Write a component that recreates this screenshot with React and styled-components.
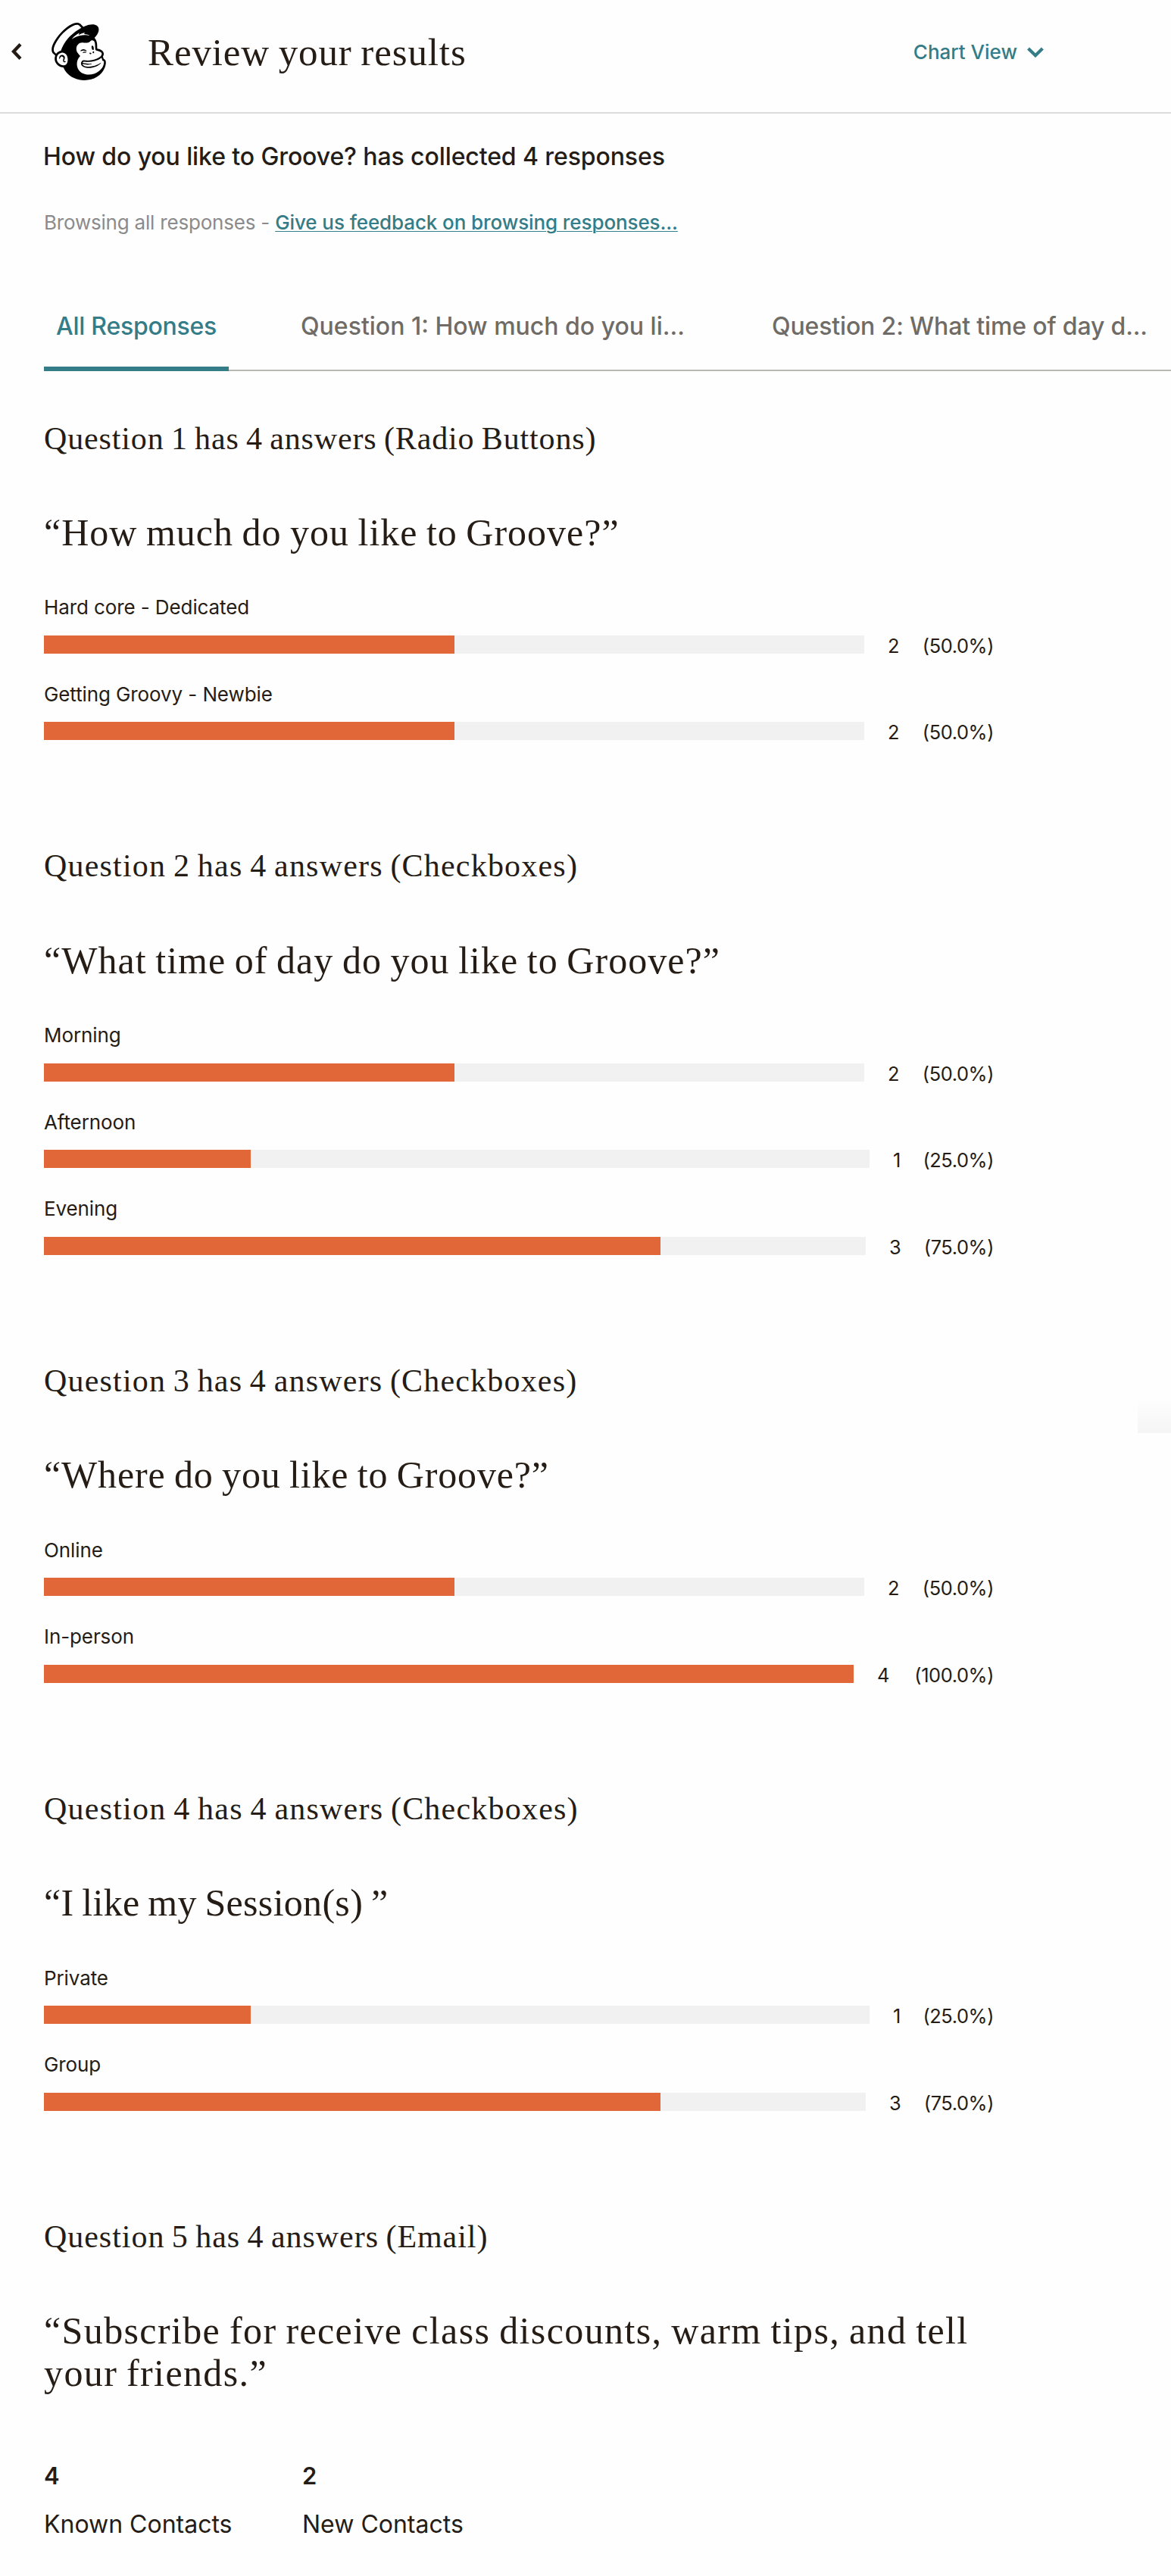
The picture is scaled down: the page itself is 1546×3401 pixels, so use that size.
import React, { useState } from 'react';
import styled, { createGlobalStyle } from 'styled-components';
import { SiMailchimp } from 'react-icons/si';

const tabs = [
  { label: 'All Responses', width: 244, tracking: -0.25 },
  { label: 'Question 1: How much do you li...', width: 543, tracking: 0 },
  { label: 'Question 2: What time of day d...', width: 543, tracking: -0.15 },
];

// stats is the room that the count and the percentage take beside the bar
const questions = [
  {
    title: 'Question 1 has 4 answers (Radio Buttons)',
    titleTracking: 0.86,
    quote: '“How much do you like to Groove?”',
    quoteTracking: 1,
    answers: [
      { label: 'Hard core - Dedicated', count: 2, percent: 50, stats: 171 },
      { label: 'Getting Groovy - Newbie', count: 2, percent: 50, stats: 171 },
    ],
  },
  {
    title: 'Question 2 has 4 answers (Checkboxes)',
    titleTracking: 1.2,
    quote: '“What time of day do you like to Groove?”',
    quoteTracking: 1.04,
    answers: [
      { label: 'Morning', count: 2, percent: 50, stats: 171 },
      { label: 'Afternoon', count: 1, percent: 25, stats: 164 },
      { label: 'Evening', count: 3, percent: 75, stats: 169 },
    ],
  },
  {
    title: 'Question 3 has 4 answers (Checkboxes)',
    titleTracking: 1.18,
    quote: '“Where do you like to Groove?”',
    quoteTracking: 0.86,
    answers: [
      { label: 'Online', count: 2, percent: 50, stats: 171 },
      { label: 'In-person', count: 4, percent: 100, stats: 185 },
    ],
  },
  {
    title: 'Question 4 has 4 answers (Checkboxes)',
    titleTracking: 1.22,
    quote: '“I like my Session(s) ”',
    quoteTracking: 0.3,
    answers: [
      { label: 'Private', count: 1, percent: 25, stats: 164 },
      { label: 'Group', count: 3, percent: 75, stats: 169 },
    ],
  },
  {
    title: 'Question 5 has 4 answers (Email)',
    titleTracking: 0.96,
    quote:
      '“Subscribe for receive class discounts, warm tips, and tell your friends.”',
    quoteTracking: 1.38,
    contacts: [
      { label: 'Known Contacts', count: 4 },
      { label: 'New Contacts', count: 2 },
    ],
  },
];

const Answer = ({ label, count, percent, stats }) => (
  <AnswerRow>
    <AnswerLabel>{label}</AnswerLabel>
    <Meter>
      <Track>
        <Fill style={{ width: `${percent}%` }} />
      </Track>
      <Stats $width={stats}>
        <span>{count}</span>
        <Percent>({percent.toFixed(1)}%)</Percent>
      </Stats>
    </Meter>
  </AnswerRow>
);

const Question = ({ title, titleTracking, quote, quoteTracking, answers, contacts }) => (
  <QuestionSection>
    <QuestionTitle $tracking={titleTracking}>{title}</QuestionTitle>
    <Quote $tracking={quoteTracking}>{quote}</Quote>
    {answers ? (
      <AnswerList>
        {answers.map(answer => (
          <Answer {...answer} key={answer.label} />
        ))}
      </AnswerList>
    ) : null}
    {contacts ? (
      <ContactList>
        {contacts.map(({ label, count }) => (
          <Contact key={label}>
            <ContactCount>{count}</ContactCount>
            <ContactLabel>{label}</ContactLabel>
          </Contact>
        ))}
      </ContactList>
    ) : null}
  </QuestionSection>
);

const App = () => {
  const [activeTab, setActiveTab] = useState(0);

  return (
    <Page>
      <GlobalStyle />
      <Header>
        <BackButton aria-label="Back">
          <svg width="14" height="22" viewBox="0 0 14 22">
            <path d="M12 1.6 L3 11 L12 20.4" fill="none" stroke="#241c15" strokeWidth="4.4" />
          </svg>
        </BackButton>
        <Logo />
        <PageTitle>Review your results</PageTitle>
        <ViewToggle>
          Chart View
          <svg width="22" height="14" viewBox="0 0 22 14">
            <path d="M1.6 2 L11 11.2 L20.4 2" fill="none" stroke="#347c87" strokeWidth="4.2" />
          </svg>
        </ViewToggle>
      </Header>
      <Main>
        <Summary>How do you like to Groove? has collected 4 responses</Summary>
        <Browsing>
          Browsing all responses -{' '}
          <FeedbackLink href="#">Give us feedback on browsing responses...</FeedbackLink>
        </Browsing>
        <Tabs>
          {tabs.map(({ label, width, tracking }, index) => (
            <Tab
              key={label}
              $active={index === activeTab}
              $width={width}
              $tracking={tracking}
              onClick={() => setActiveTab(index)}
            >
              {label}
            </Tab>
          ))}
        </Tabs>
        <Questions>
          {questions.map(question => (
            <Question {...question} key={question.title} />
          ))}
        </Questions>
      </Main>
      <FloatingEdge />
    </Page>
  );
};

export default App;

const GlobalStyle = createGlobalStyle`
  * {
    box-sizing: border-box;
  }

  body {
    margin: 0;
    background: #fefefe;
    color: #241c15;
    font-family: Inter, 'Liberation Sans', sans-serif;
  }

  h1, h2, h3, p {
    margin: 0;
    font-weight: 400;
  }

  svg {
    display: block;
  }

  button {
    padding: 0;
    border: none;
    background: none;
    color: inherit;
    font: inherit;
  }
`;

const serif = "'Liberation Serif', 'Times New Roman', serif";

const Page = styled.div`
  position: relative;
  min-height: 3401px;
  overflow: hidden;
`;

const Header = styled.header`
  display: flex;
  align-items: flex-start;
  height: 150px;
  padding: 30px 168px 0 15px;
  border-bottom: 2px solid #dbdbdb;
`;

const BackButton = styled.button`
  width: 14px;
  margin: 27px 37px 0 0;
`;

const Logo = styled(SiMailchimp)`
  width: 76px;
  height: 76px;
  color: #000;
`;

const PageTitle = styled.h1`
  margin: 9px 0 0 53px;
  font-family: ${serif};
  font-size: 51px;
  line-height: 60px;
  letter-spacing: 0.88px;
  word-spacing: -2px;
`;

const ViewToggle = styled.button`
  display: flex;
  align-items: center;
  gap: 13px;
  margin: 23px 0 0 auto;
  color: #347c87;
  font-size: 26px;
  font-weight: 500;
  line-height: 32px;
`;

const Main = styled.main`
  padding: 37px 0 0 58px;
`;

const Summary = styled.h2`
  margin-left: -1px;
  font-size: 32px;
  font-weight: 500;
  line-height: 40px;
  letter-spacing: -0.1px;
`;

const Browsing = styled.p`
  margin-top: 51px;
  color: #8b8b8b;
  font-size: 26px;
  line-height: 32px;
  letter-spacing: -0.2px;
`;

const FeedbackLink = styled.a`
  color: #347c87;
  font-weight: 500;
  letter-spacing: -0.1px;
  text-decoration: underline;
  text-decoration-thickness: 1px;
  text-underline-offset: 2px;
`;

const Tabs = styled.div`
  display: flex;
  gap: 79px;
  margin-top: 101px;
  box-shadow: inset 0 -2px #b9b9b4;
`;

const Tab = styled.button`
  flex: none;
  width: ${({ $width }) => $width}px;
  height: 79px;
  padding: 0 0 ${({ $active }) => ($active ? 33 : 39)}px 16px;
  border-bottom: ${({ $active }) => ($active ? '6px solid #347c87' : 'none')};
  color: ${({ $active }) => ($active ? '#347c87' : '#6f6b66')};
  font-size: 32px;
  font-weight: 500;
  line-height: 40px;
  letter-spacing: ${({ $tracking }) => $tracking}px;
  text-align: left;
  white-space: nowrap;
`;

const Questions = styled.div`
  display: flex;
  flex-direction: column;
  gap: 103.3px;
  width: 1254px;
  padding-top: 63.5px;
`;

const QuestionSection = styled.section`
  display: flex;
  flex-direction: column;
`;

const QuestionTitle = styled.h3`
  font-family: ${serif};
  font-size: 42px;
  line-height: 50px;
  letter-spacing: ${({ $tracking }) => $tracking}px;
  word-spacing: -2px;
`;

const Quote = styled.p`
  margin-top: 71.5px;
  font-family: ${serif};
  font-size: 50px;
  line-height: 56px;
  letter-spacing: ${({ $tracking }) => $tracking}px;
  word-spacing: -2px;
`;

const AnswerList = styled.div`
  margin-top: 55.2px;
`;

const AnswerRow = styled.div`
  height: 114.5px;
`;

const AnswerLabel = styled.div`
  font-size: 26px;
  line-height: 32px;
  letter-spacing: -0.1px;
`;

const Meter = styled.div`
  display: flex;
  height: 24px;
  margin-top: 20.7px;
`;

const Track = styled.div`
  flex: 1;
  background: #f1f1f1;
`;

const Fill = styled.div`
  height: 100%;
  background: #e16739;
`;

const Stats = styled.div`
  display: flex;
  justify-content: space-between;
  width: ${({ $width }) => $width}px;
  padding-left: 31px;
  font-size: 25.4px;
  line-height: 27px;
`;

const Percent = styled.span`
  letter-spacing: -0.4px;
`;

const ContactList = styled.div`
  display: flex;
  margin-top: 87.5px;
`;

const Contact = styled.div`
  width: 341px;
`;

const ContactCount = styled.div`
  font-size: 31px;
  font-weight: 600;
  line-height: 40px;
`;

const ContactLabel = styled.div`
  margin-top: 24px;
  font-size: 32px;
  line-height: 40px;
`;

// Top edge of the feedback widget that sticks out at the right of the window
const FloatingEdge = styled.div`
  position: absolute;
  top: 1846px;
  right: 0;
  width: 44px;
  height: 46px;
  background: linear-gradient(rgba(245, 245, 245, 0), #f5f5f5);
`;
